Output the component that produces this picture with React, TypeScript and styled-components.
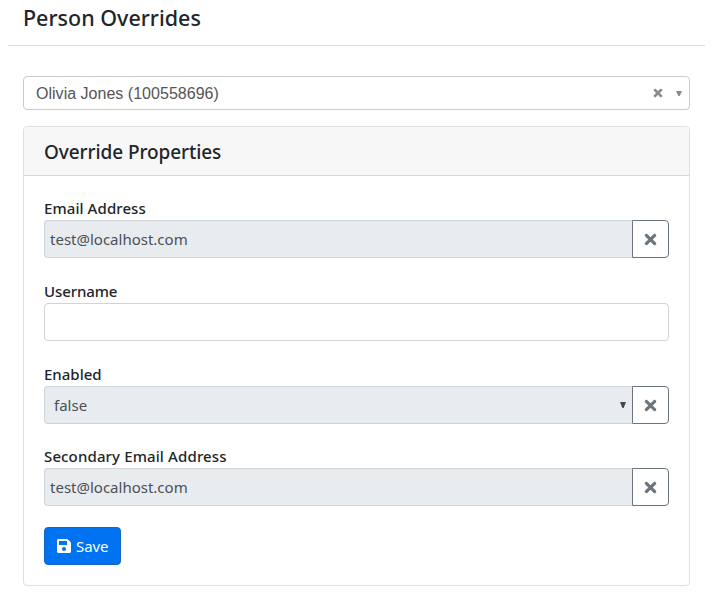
import React from "react";
import styled, { createGlobalStyle } from "styled-components";
import { FaSave, FaTimes } from "react-icons/fa";

const GlobalStyle = createGlobalStyle`
  *, *::before, *::after { box-sizing: border-box; }
  body {
    margin: 0;
    background: #fff;
    color: #212529;
    font-family: "Segoe UI", "Noto Sans", sans-serif;
    font-size: 15px;
    line-height: 24px;
  }
`;

const Page = styled.main`
  width: 715px;
  height: 598px;
  padding: 0 10px 0 8px;
  overflow: hidden;
`;

const PageHeader = styled.header`
  height: 46px;
  padding: 4px 15px 0;
  border-bottom: 1px solid #dcdee5;
`;

const PageTitle = styled.h1`
  margin: 0;
  font-size: 21.5px;
  font-weight: 500;
  line-height: 28px;
`;

const Content = styled.div`
  padding: 30px 15px 0;
`;

const PersonSelect = styled.div`
  display: flex;
  align-items: center;
  height: 34px;
  padding: 0 7px 0 12px;
  border: 1px solid #c8cacc;
  border-radius: 4px;
  color: #555;
  font: 16px/32px "Liberation Sans", Arial, sans-serif;
`;

const PersonName = styled.span`
  flex: 1;
  padding-top: 2px;
  line-height: 30px;
  letter-spacing: 0.02px;
`;

const ClearIcon = styled(FaTimes)`
  width: 12px;
  height: 12px;
  margin-right: 12px;
  color: #888;
  stroke: #888;
  stroke-width: 20px;
`;

const Caret = styled.svg<{ $color: string }>`
  flex: none;
  display: block;
  fill: ${(p) => p.$color};
`;

const Card = styled.section`
  height: 460px;
  margin-top: 16px;
  border: 1px solid #dfdfdf;
  border-radius: 4px;
`;

const CardHeader = styled.div`
  height: 49px;
  padding: 13px 20px 0;
  border-bottom: 1px solid #d8d8d8;
  border-radius: 3px 3px 0 0;
  background: #f7f7f7;
`;

const CardTitle = styled.h2`
  margin: 0;
  font-size: 19px;
  font-weight: 500;
  line-height: 24px;
  letter-spacing: -0.08px;
`;

const Form = styled.form`
  padding: 20px 20px 0;
`;

const Field = styled.div<{ $gap?: number }>`
  margin-bottom: ${(p) => p.$gap ?? 21}px;
`;

const Label = styled.label<{ $spacing?: number }>`
  display: block;
  height: 24px;
  font-weight: 500;
  letter-spacing: ${(p) => p.$spacing ?? 0}px;
`;

const InputGroup = styled.div`
  display: flex;
  height: 38px;
`;

const Control = styled.div<{ $disabled?: boolean; $joined?: boolean; $inset?: number }>`
  display: flex;
  flex: 1;
  align-items: center;
  justify-content: space-between;
  padding: 0 6px 0 ${(p) => p.$inset ?? 5}px;
  border: 1px solid #ced4da;
  border-right-width: ${(p) => (p.$joined ? 0 : 1)}px;
  border-radius: ${(p) => (p.$joined ? "4px 0 0 4px" : "4px")};
  background: ${(p) => (p.$disabled ? "#e9ecef" : "#fff")};
  color: #495057;
`;

const RemoveButton = styled.button`
  display: flex;
  align-items: center;
  justify-content: center;
  width: 37px;
  padding: 0;
  border: 1px solid #6c757d;
  border-radius: 0 4px 4px 0;
  background: #fff;
  color: #6c757d;
  font-size: 17px;
`;

const SaveButton = styled.button`
  display: flex;
  align-items: center;
  gap: 4px;
  width: 77px;
  height: 38px;
  padding: 0 0 0 11px;
  border: 1px solid #1667c4;
  border-radius: 4px;
  background: #0073f2;
  color: #fff;
  font: inherit;
  letter-spacing: -0.1px;
`;

const SaveIcon = styled(FaSave)`
  width: 16px;
  height: 16px;
`;

const Remove = () => (
  <RemoveButton type="button" aria-label="Remove override">
    <FaTimes />
  </RemoveButton>
);

export default function App() {
  return (
    <>
      <GlobalStyle />
      <Page>
        <PageHeader>
          <PageTitle>Person Overrides</PageTitle>
        </PageHeader>
        <Content>
          <PersonSelect>
            <PersonName>Olivia Jones (100558696)</PersonName>
            <ClearIcon />
            <Caret $color="#888" width="6" height="5" viewBox="0 0 6 5">
              <path d="M0 0h6L3.6 5H2.4z" />
            </Caret>
          </PersonSelect>
          <Card>
            <CardHeader>
              <CardTitle>Override Properties</CardTitle>
            </CardHeader>
            <Form>
              <Field>
                <Label $spacing={0.08}>Email Address</Label>
                <InputGroup>
                  <Control $disabled $joined>test@localhost.com</Control>
                  <Remove />
                </InputGroup>
              </Field>
              <Field>
                <Label $spacing={-0.1}>Username</Label>
                <InputGroup>
                  <Control />
                </InputGroup>
              </Field>
              <Field $gap={20}>
                <Label>Enabled</Label>
                <InputGroup>
                  <Control $disabled $joined $inset={9}>
                    <span>false</span>
                    <Caret $color="#40464c" width="6" height="6" viewBox="0 0 6 6">
                      <path d="M0 0h6L3.6 6H2.4z" />
                    </Caret>
                  </Control>
                  <Remove />
                </InputGroup>
              </Field>
              <Field>
                <Label $spacing={0.13}>Secondary Email Address</Label>
                <InputGroup>
                  <Control $disabled $joined>test@localhost.com</Control>
                  <Remove />
                </InputGroup>
              </Field>
              <SaveButton type="button">
                <SaveIcon />
                Save
              </SaveButton>
            </Form>
          </Card>
        </Content>
      </Page>
    </>
  );
}
